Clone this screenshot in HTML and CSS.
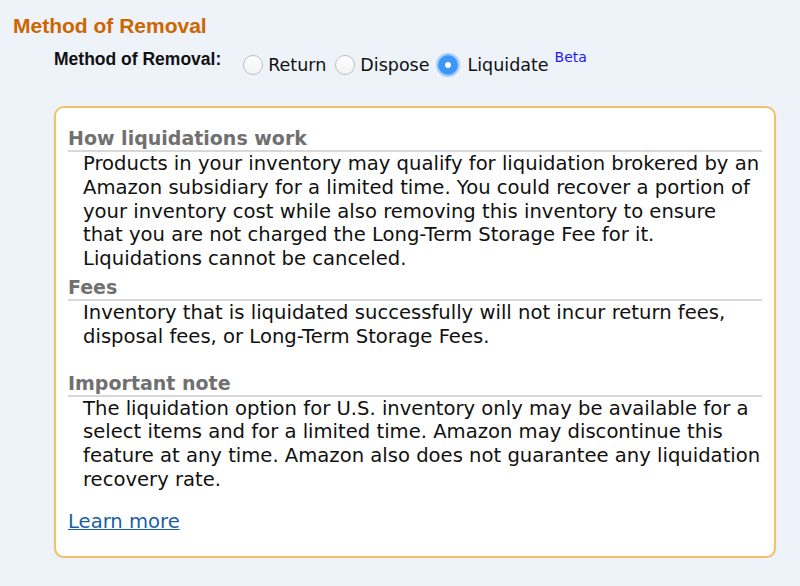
FILE: index.html
```html
<!DOCTYPE html>
<html>
<head>
<meta charset="utf-8">
<link rel="stylesheet" href="styles.css">
</head>
<body>
<div class="page">
  <h2 class="title">Method of Removal</h2>
  <div class="method-row">
    <span class="method-label">Method of Removal:</span>
    <div class="options">
      <label class="option"><span class="radio"></span>Return</label>
      <label class="option"><span class="radio"></span>Dispose</label>
      <label class="option"><span class="radio checked"></span>Liquidate <sup class="beta">Beta</sup></label>
    </div>
  </div>
  <div class="info-box">
    <h3 class="sec-head">How liquidations work</h3>
    <p class="sec-body">Products in your inventory may qualify for liquidation brokered by an Amazon subsidiary for a limited time. You could recover a portion of your inventory cost while also removing this inventory to ensure that you are not charged the Long-Term Storage Fee for it. Liquidations cannot be canceled.</p>
    <h3 class="sec-head">Fees</h3>
    <p class="sec-body spaced">Inventory that is liquidated successfully will not incur return fees, disposal fees, or Long-Term Storage Fees.</p>
    <h3 class="sec-head">Important note</h3>
    <p class="sec-body">The liquidation option for U.S. inventory only may be available for a select items and for a limited time. Amazon may discontinue this feature at any time. Amazon also does not guarantee any liquidation recovery rate.</p>
    <a class="learn" href="#">Learn more</a>
  </div>
</div>
</body>
</html>
```

FILE: styles.css
```css
html, body {
  margin: 0;
  padding: 0;
  background: #eef2f9;
}
body {
  font-family: "DejaVu Sans", Verdana, sans-serif;
  color: #111;
}
.page {
  padding: 14px 0 0 13px;
}
.title {
  margin: 0;
  font-family: "Liberation Sans", Arial, sans-serif;
  font-size: 21px;
  line-height: 24px;
  font-weight: bold;
  color: #cc6600;
}
.method-row {
  display: flex;
  align-items: flex-start;
  margin-left: 41px;
  margin-top: 11px;
}
.method-label {
  font-family: "Liberation Sans", Arial, sans-serif;
  font-weight: bold;
  font-size: 17.5px;
  line-height: 20px;
  color: #111;
}
.options {
  display: flex;
  align-items: center;
  margin-left: 22px;
  margin-top: 4px;
  font-size: 17.5px;
  line-height: 24px;
}
.option {
  display: flex;
  align-items: center;
  margin-right: 9px;
}
.radio {
  display: inline-block;
  box-sizing: border-box;
  width: 20px;
  height: 20px;
  border-radius: 50%;
  border: 1px solid #bdbdbd;
  background: linear-gradient(#ffffff, #f3f3f3);
  margin-right: 5px;
}
.radio.checked {
  border: none;
  background: radial-gradient(circle, #ffffff 0 2.5px, #3d97f7 3.5px);
  box-shadow: 0 0 0 2px rgba(80, 160, 250, 0.45);
  margin-left: 0;
  margin-right: 9px;
}
.beta {
  font-size: 14px;
  color: #1a1aff;
  vertical-align: top;
  position: relative;
  top: -8px;
  margin-left: 6px;
}
.info-box {
  margin: 29px 24px 0 41px;
  background: #fff;
  border: 2px solid #f5c06a;
  border-radius: 10px;
  padding: 19px 12px 22px 12px;
  box-shadow: 0 1px 2px rgba(0, 0, 0, 0.08);
}
.sec-head {
  margin: 0;
  font-size: 19px;
  line-height: 23px;
  font-weight: bold;
  color: #707070;
  border-bottom: 2px solid #d8d8d8;
}
.sec-body {
  margin: 0 0 5px 15px;
  font-size: 19.6px;
  line-height: 23.8px;
  color: #111;
}
.sec-body.spaced {
  margin-bottom: 23px;
}
.learn {
  display: inline-block;
  margin-top: 13px;
  font-size: 19.6px;
  line-height: 24px;
  color: #1b5fa8;
  text-decoration: underline;
}
```
